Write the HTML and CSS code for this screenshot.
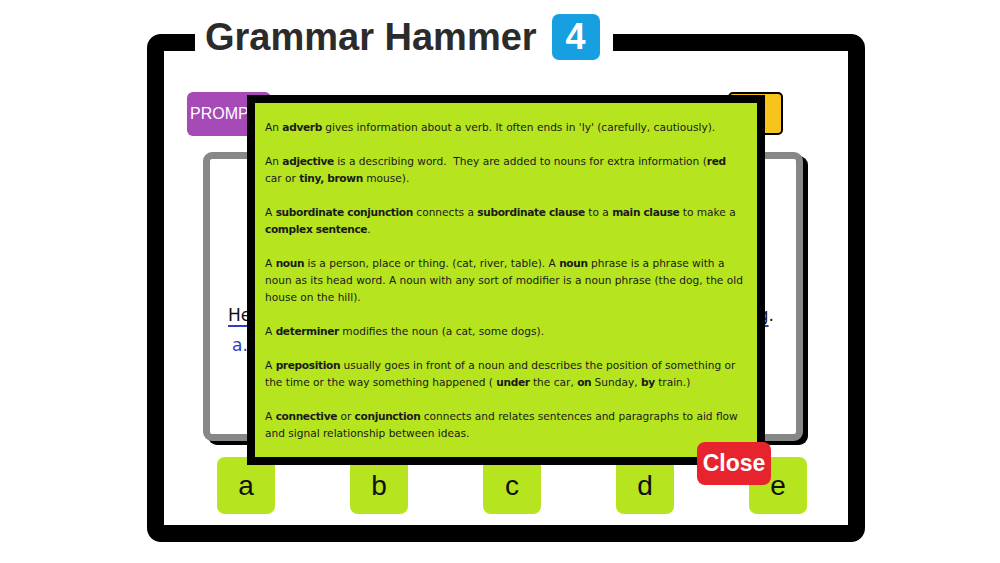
FILE: index.html
```html
<!DOCTYPE html>
<html lang="en">
<head>
<meta charset="utf-8">
<title>Grammar Hammer</title>
<link rel="stylesheet" href="styles.css">
</head>
<body>
<div class="stage">
  <div class="frame">
    <div class="title">
      <span class="title-text">Grammar Hammer</span>
      <span class="level">4</span>
    </div>
    <div class="toolbar">
      <div class="prompt">PROMPT</div>
      <div class="help"></div>
    </div>
    <div class="card">
      <div class="sentence"><span class="ul">He was very tired after a long day of walking</span>.</div>
      <div class="option">a. the</div>
    </div>
    <div class="answers">
      <div class="ans">a</div>
      <div class="ans">b</div>
      <div class="ans">c</div>
      <div class="ans">d</div>
      <div class="ans">e</div>
    </div>
    <div class="overlay">
      <p>An <b>adverb</b> gives information about a verb. It often ends in 'ly' (carefully, cautiously).</p>
      <p>An <b>adjective</b> is a describing word.&nbsp; They are added to nouns for extra information (<b>red</b><br>car or <b>tiny, brown</b> mouse).</p>
      <p>A <b>subordinate conjunction</b> connects a <b>subordinate clause</b> to a <b>main clause</b> to make a<br><b>complex sentence</b>.</p>
      <p>A <b>noun</b> is a person, place or thing. (cat, river, table). A <b>noun</b> phrase is a phrase with a<br>noun as its head word. A noun with any sort of modifier is a noun phrase (the dog, the old<br>house on the hill).</p>
      <p>A <b>determiner</b> modifies the noun (a cat, some dogs).</p>
      <p>A <b>preposition</b> usually goes in front of a noun and describes the position of something or<br>the time or the way something happened ( <b>under</b> the car, <b>on</b> Sunday, <b>by</b> train.)</p>
      <p>A <b>connective</b> or <b>conjunction</b> connects and relates sentences and paragraphs to aid flow<br>and signal relationship between ideas.</p>
    </div>
    <div class="close">Close</div>
  </div>
</div>
</body>
</html>
```

FILE: styles.css
```css
* { box-sizing: border-box; }
html, body { margin: 0; padding: 0; background: #fff; }
body { width: 1000px; height: 563px; overflow: hidden; font-family: "Liberation Sans", Arial, sans-serif; }

.stage { padding: 34px 0 0 147px; }

.frame {
  position: relative;
  width: 718px;
  height: 508px;
  border: 17px solid #000;
  border-radius: 14px;
  background: #fff;
  display: flex;
  flex-direction: column;
  padding: 41px 0 0 0;
}

.title {
  position: absolute;
  left: 31px;
  top: -37px;
  height: 46px;
  background: #fff;
  display: flex;
  align-items: center;
  gap: 15px;
  padding: 0 13px 0 10px;
}
.title-text {
  font-weight: bold;
  font-size: 38px;
  color: #2b2b2b;
  line-height: 46px;
}
.level {
  width: 48px;
  height: 46px;
  border-radius: 7px;
  background: #16a0e2;
  color: #fff;
  font-weight: bold;
  font-size: 36px;
  display: flex;
  align-items: center;
  justify-content: center;
}

.toolbar {
  display: flex;
  justify-content: space-between;
  padding: 0 65px 0 23px;
  height: 44px;
}
.prompt {
  width: 84px;
  height: 44px;
  border-radius: 6px;
  background: #a54ab6;
  color: #fff;
  font-size: 16px;
  display: flex;
  align-items: center;
  padding-left: 3px;
}
.help {
  width: 55px;
  height: 43px;
  border: 2px solid #000;
  border-radius: 5px;
  background: #f8c41c;
}

.card {
  margin: 16px 0 0 39px;
  width: 600px;
  height: 289px;
  border: 7px solid #878787;
  border-radius: 9px;
  box-shadow: 5px 4px 0 #000;
  background: #fff;
  padding: 145px 0 0 18px;
  font-family: "DejaVu Sans", sans-serif;
}
.sentence {
  width: 546px;
  font-size: 17px;
  color: #111;
  line-height: 22px;
  text-align: justify;
  text-align-last: justify;
}
.ul { text-decoration: underline; text-decoration-color: #2b3fc0; text-decoration-thickness: 2px; text-underline-offset: 4px; }
.option {
  margin-top: 9px;
  padding-left: 4px;
  font-size: 17px;
  color: #2f3fc4;
}

.answers {
  display: flex;
  gap: 75px;
  padding-left: 53px;
  margin-top: 16px;
}
.ans {
  width: 58px;
  height: 57px;
  border-radius: 8px;
  background: #b6e41f;
  color: #111;
  font-size: 28px;
  display: flex;
  align-items: center;
  justify-content: center;
}

.overlay {
  position: absolute;
  left: 83px;
  top: 44px;
  width: 518px;
  height: 370px;
  border: 8px solid #000;
  background: #b6e41f;
  padding: 16px 0 0 10px;
  font-family: "DejaVu Sans", sans-serif;
  font-size: 10.6px;
  line-height: 17px;
  color: #1a1a1a;
  white-space: nowrap;
}
.overlay p { margin: 0 0 17px 0; }
.overlay b { letter-spacing: -0.35px; }

.close {
  position: absolute;
  left: 533px;
  top: 391px;
  width: 74px;
  height: 43px;
  border-radius: 8px;
  background: #e7242d;
  color: #fff;
  font-weight: bold;
  font-size: 23px;
  display: flex;
  align-items: center;
  justify-content: center;
}
```
